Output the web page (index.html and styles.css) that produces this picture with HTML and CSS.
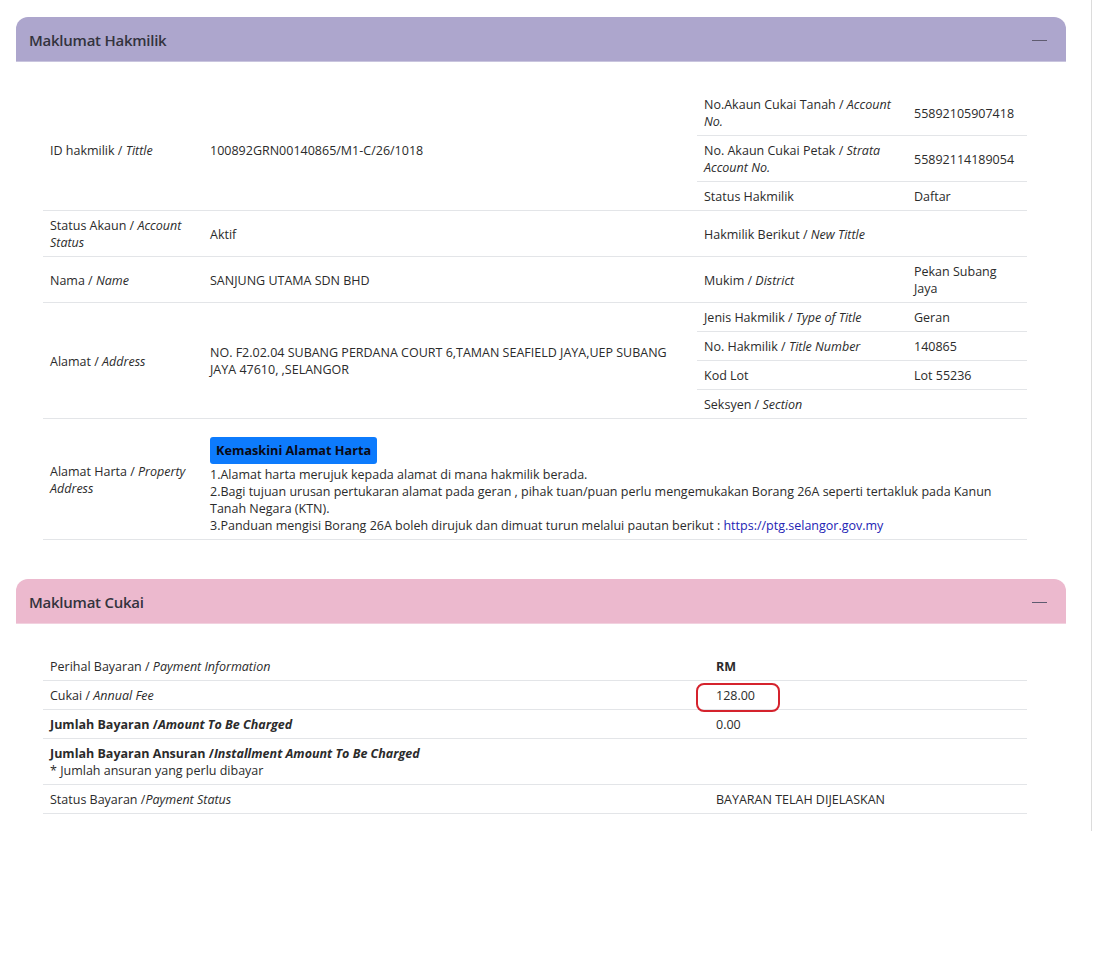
FILE: index.html
```html
<!DOCTYPE html>
<html lang="ms">
<head>
<meta charset="utf-8">
<title>Maklumat Hakmilik</title>
<link rel="stylesheet" href="styles.css">
</head>
<body>
<div class="page">
  <section class="card">
    <div class="card-header header-purple">
      <span class="card-title">Maklumat Hakmilik</span>
      <span class="collapse-icon"></span>
    </div>
    <div class="card-body">
      <table class="info-table">
        <colgroup>
          <col class="c-label"><col class="c-value"><col class="c-label2"><col class="c-value2">
        </colgroup>
        <tbody>
          <tr>
            <td rowspan="3">ID hakmilik / <i>Tittle</i></td>
            <td rowspan="3">100892GRN00140865/M1-C/26/1018</td>
            <td>No.Akaun Cukai Tanah / <i>Account No.</i></td>
            <td>55892105907418</td>
          </tr>
          <tr>
            <td>No. Akaun Cukai Petak / <i>Strata Account No.</i></td>
            <td>55892114189054</td>
          </tr>
          <tr>
            <td>Status Hakmilik</td>
            <td>Daftar</td>
          </tr>
          <tr>
            <td>Status Akaun / <i>Account Status</i></td>
            <td>Aktif</td>
            <td>Hakmilik Berikut / <i>New Tittle</i></td>
            <td></td>
          </tr>
          <tr>
            <td>Nama / <i>Name</i></td>
            <td>SANJUNG UTAMA SDN BHD</td>
            <td>Mukim / <i>District</i></td>
            <td>Pekan Subang Jaya</td>
          </tr>
          <tr>
            <td rowspan="4">Alamat / <i>Address</i></td>
            <td rowspan="4">NO. F2.02.04 SUBANG PERDANA COURT 6,TAMAN SEAFIELD JAYA,UEP SUBANG JAYA 47610, ,SELANGOR</td>
            <td>Jenis Hakmilik / <i>Type of Title</i></td>
            <td>Geran</td>
          </tr>
          <tr>
            <td>No. Hakmilik / <i>Title Number</i></td>
            <td>140865</td>
          </tr>
          <tr>
            <td>Kod Lot</td>
            <td>Lot 55236</td>
          </tr>
          <tr>
            <td>Seksyen / <i>Section</i></td>
            <td></td>
          </tr>
          <tr>
            <td>Alamat Harta / <i>Property Address</i></td>
            <td colspan="3">
              <button class="btn-update" type="button">Kemaskini Alamat Harta</button>
              <div class="notes">
                1.Alamat harta merujuk kepada alamat di mana hakmilik berada.<br>
                2.Bagi tujuan urusan pertukaran alamat pada geran , pihak tuan/puan perlu mengemukakan Borang 26A seperti tertakluk pada Kanun Tanah Negara (KTN).<br>
                3.Panduan mengisi Borang 26A boleh dirujuk dan dimuat turun melalui pautan berikut : <a class="link" href="#">https://ptg.selangor.gov.my</a>
              </div>
            </td>
          </tr>
        </tbody>
      </table>
    </div>
  </section>

  <section class="card">
    <div class="card-header header-pink">
      <span class="card-title">Maklumat Cukai</span>
      <span class="collapse-icon"></span>
    </div>
    <div class="card-body">
      <table class="info-table">
        <colgroup>
          <col class="c-tax-label"><col class="c-tax-value">
        </colgroup>
        <tbody>
          <tr>
            <td>Perihal Bayaran / <i>Payment Information</i></td>
            <td><b>RM</b></td>
          </tr>
          <tr>
            <td>Cukai / <i>Annual Fee</i></td>
            <td class="marked">128.00<span class="annotation"></span></td>
          </tr>
          <tr>
            <td><b>Jumlah Bayaran /<i>Amount To Be Charged</i></b></td>
            <td>0.00</td>
          </tr>
          <tr>
            <td><b>Jumlah Bayaran Ansuran /<i>Installment Amount To Be Charged</i></b><br>* Jumlah ansuran yang perlu dibayar</td>
            <td></td>
          </tr>
          <tr>
            <td>Status Bayaran /<i>Payment Status</i></td>
            <td>BAYARAN TELAH DIJELASKAN</td>
          </tr>
        </tbody>
      </table>
    </div>
  </section>
</div>
</body>
</html>
```

FILE: styles.css
```css
* {
  box-sizing: border-box;
}

html, body {
  margin: 0;
  padding: 0;
  background: #ffffff;
}

body {
  font-family: "Open Sans", "Noto Sans", "Liberation Sans", sans-serif;
  font-size: 12.5px;
  line-height: 17px;
  color: #2b2b2b;
}

.page {
  width: 1092px;
  padding: 17px 0 17px 16px;
  border-right: 1px solid #dcdcdc;
}

.card {
  width: 1050px;
  margin-bottom: 39px;
}

.card:last-child {
  margin-bottom: 0;
}

.card-header {
  height: 45px;
  display: flex;
  align-items: center;
  justify-content: space-between;
  padding: 2px 19px 0 13px;
  border-radius: 12px 12px 0 0;
  border-bottom: 1px solid rgba(255, 255, 255, 0.35);
}

.header-purple {
  background: #ada6cd;
}

.header-pink {
  background: #ecb9ce;
}

.card-title {
  font-size: 15px;
  font-weight: 600;
  letter-spacing: -0.25px;
  color: #33333d;
}

.collapse-icon {
  display: block;
  width: 15px;
  height: 1px;
  background: #5f5b70;
  margin-top: 0;
}

.card-body {
  padding: 28px 0 0 27px;
}

.info-table {
  width: 984px;
  border-collapse: collapse;
  table-layout: fixed;
}

.c-label { width: 160px; }
.c-value { width: 494px; }
.c-label2 { width: 210px; }
.c-value2 { width: 120px; }

.c-tax-label { width: 666px; }
.c-tax-value { width: 318px; }

.info-table td {
  padding: 6px 7px 5px 7px;
  vertical-align: middle;
  border-bottom: 1px solid #e3e5e8;
  text-align: left;
}

.info-table i {
  font-style: italic;
}

.btn-update {
  display: inline-block;
  margin: 12px 0 2px 0;
  padding: 0 6px;
  height: 27px;
  background: #0d7bfd;
  color: #0a0a14;
  border: none;
  border-radius: 3px;
  font-family: inherit;
  font-size: 12.7px;
  font-weight: 700;
  line-height: 27px;
}

.notes {
  line-height: 17px;
}

.link {
  color: #2323b4;
  text-decoration: none;
}

.marked {
  position: relative;
}

.annotation {
  position: absolute;
  left: -13px;
  top: 2px;
  width: 84px;
  height: 29px;
  border: 2px solid #d5232d;
  border-radius: 8px;
}
```
